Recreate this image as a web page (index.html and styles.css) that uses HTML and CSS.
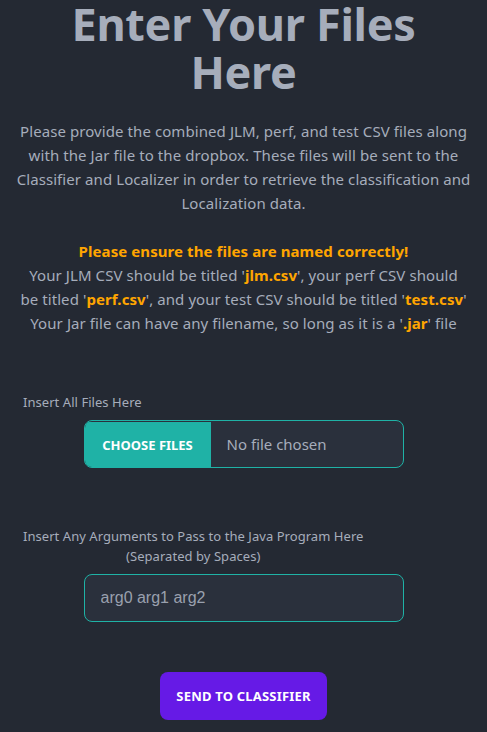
FILE: index.html
```html
<!DOCTYPE html>
<html lang="en">
<head>
<meta charset="utf-8">
<title>Enter Your Files Here</title>
<link rel="stylesheet" href="styles.css">
</head>
<body>
<main class="page">
  <h1 class="title">Enter Your Files Here</h1>
  <section class="intro">
    <p class="text">Please provide the combined JLM, perf, and test CSV files along with the Jar file to the dropbox. These files will be sent to the Classifier and Localizer in order to retrieve the classification and Localization data.</p>
    <p class="text">
      <strong class="warn">Please ensure the files are named correctly!</strong><br>
      Your JLM CSV should be titled '<strong class="warn">jlm.csv</strong>', your perf CSV should be&nbsp;titled '<strong class="warn">perf.csv</strong>', and your test CSV should be titled '<strong class="warn">test.csv</strong>'<br>
      Your Jar file can have any filename, so long as it is a '<strong class="warn">.jar</strong>' file
    </p>
  </section>
  <form class="form">
    <div class="field">
      <label class="label" for="files">Insert All Files Here</label>
      <input id="files" class="file-input" type="file" multiple>
    </div>
    <div class="field field-args">
      <label class="label label-center" for="args"><span>Insert Any Arguments to Pass to the Java Program Here</span><span>(Separated by Spaces)</span></label>
      <input id="args" class="text-input" type="text" placeholder="arg0 arg1 arg2">
    </div>
    <div class="actions">
      <button type="button" class="btn">Send to Classifier</button>
    </div>
  </form>
</main>
</body>
</html>
```
FILE: styles.css
```css
html, body {
  margin: 0;
  padding: 0;
  background: #242933;
}
body {
  font-family: "Noto Sans", "Open Sans", sans-serif;
  color: #a6adbb;
}
.page {
  display: flex;
  flex-direction: column;
  align-items: center;
}
.title {
  margin: 0;
  font-size: 45px;
  line-height: 48px;
  font-weight: 700;
  letter-spacing: -0.3px;
  text-align: center;
  color: #a6adbb;
  width: 380px;
}
.intro {
  margin-top: 23px;
  display: flex;
  flex-direction: column;
  gap: 24px;
  width: 460px;
}
.text {
  margin: 0;
  font-size: 15px;
  line-height: 24px;
  letter-spacing: 0.08px;
  text-align: center;
}
.warn {
  color: #ffa500;
  font-weight: 700;
}
.form {
  align-self: stretch;
  display: flex;
  flex-direction: column;
  gap: 48px;
  margin-top: 49px;
}
.field {
  display: flex;
  flex-direction: column;
  align-items: flex-start;
}
.field-args {
  margin-top: 2px;
}
.label {
  display: block;
  padding: 8px 4px;
  margin-left: 19px;
  font-size: 13px;
  line-height: 20px;
  letter-spacing: 0.05px;
  color: #a6adbb;
}
.label-center {
  display: flex;
  flex-direction: column;
  align-items: center;
  white-space: nowrap;
}
.file-input, .text-input {
  align-self: center;
  box-sizing: border-box;
  width: 320px;
  height: 48px;
  border: 1px solid #1fb2a6;
  border-radius: 8px;
  background: #2a303c;
  color: #a6adbb;
  margin: 0;
}
.file-input {
  padding: 0;
  padding-right: 16px;
  font-family: "Noto Sans", "Open Sans", sans-serif;
  font-size: 15px;
  overflow: hidden;
  line-height: 46px;
}
.file-input::file-selector-button {
  height: 46px;
  width: 126px;
  margin: 0 16px 0 0;
  border: none;
  background: #1fb2a6;
  color: #ffffff;
  font-family: "Noto Sans", "Open Sans", sans-serif;
  font-weight: 700;
  font-size: 13px;
  text-transform: uppercase;
  cursor: pointer;
}
.text-input {
  padding: 0 16px;
  font-family: "Liberation Sans", Arial, sans-serif;
  font-size: 16px;
  outline: none;
}
.text-input::placeholder {
  color: #a6adbb;
  opacity: 0.9;
}
.actions {
  display: flex;
  justify-content: center;
  margin-top: 2px;
}
.btn {
  height: 48px;
  padding: 0 16px;
  border: none;
  border-radius: 8px;
  background: #661ae6;
  color: #ffffff;
  font-family: "Noto Sans", "Open Sans", sans-serif;
  font-weight: 700;
  font-size: 13px;
  letter-spacing: 0.2px;
  text-transform: uppercase;
  cursor: pointer;
}
```
